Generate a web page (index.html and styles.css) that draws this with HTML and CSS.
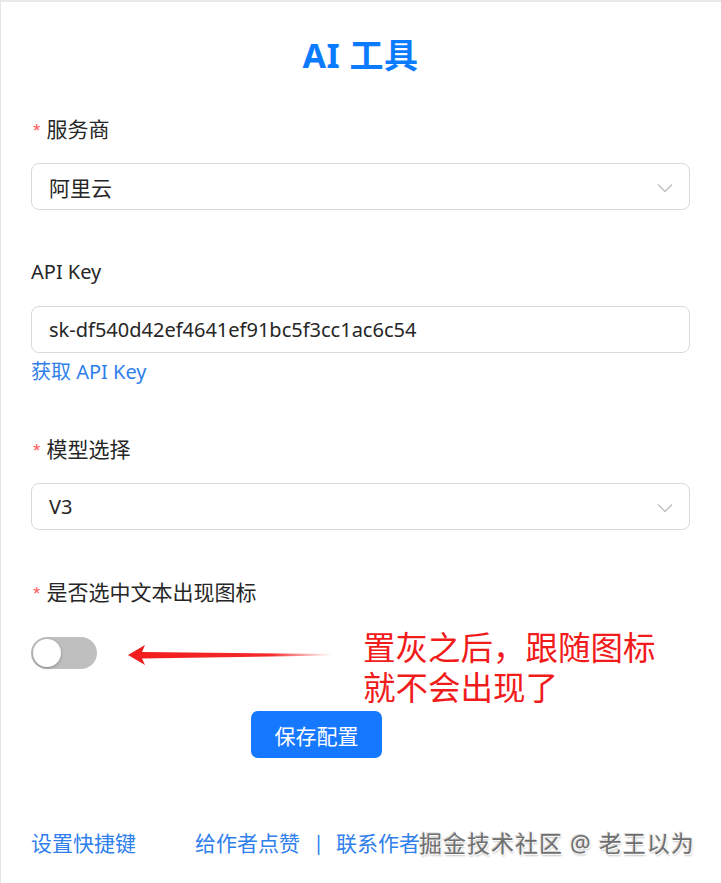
FILE: index.html
```html
<!DOCTYPE html>
<html lang="zh-CN">
<head>
<meta charset="utf-8">
<title>AI 工具</title>
<link rel="stylesheet" href="styles.css">
</head>
<body>
<div class="page">
  <h1 class="title">AI 工具</h1>

  <div class="form">
    <div class="item">
      <div class="label"><span class="req">*</span><span class="cjk">服务商</span></div>
      <div class="select">
        <span class="value cjk">阿里云</span>
        <svg class="chev" width="16" height="10" viewBox="0 0 16 10"><path d="M1 1.5 L8 8.5 L15 1.5" fill="none" stroke="#bdbdbd" stroke-width="1.3"/></svg>
      </div>
    </div>

    <div class="item">
      <div class="label">API Key</div>
      <div class="input"><span class="value">sk-df540d42ef4641ef91bc5f3cc1ac6c54</span></div>
      <a class="link getkey">获取 API Key</a>
    </div>

    <div class="item">
      <div class="label"><span class="req">*</span><span class="cjk">模型选择</span></div>
      <div class="select">
        <span class="value">V3</span>
        <svg class="chev" width="16" height="10" viewBox="0 0 16 10"><path d="M1 1.5 L8 8.5 L15 1.5" fill="none" stroke="#bdbdbd" stroke-width="1.3"/></svg>
      </div>
    </div>

    <div class="item">
      <div class="label"><span class="req">*</span><span class="cjk">是否选中文本出现图标</span></div>
      <div class="switch-row">
        <div class="switch"><span class="knob"></span></div>
        <svg class="arrow" width="204" height="22" viewBox="0 0 204 22">
          <defs>
            <linearGradient id="g" x1="0" x2="1" y1="0" y2="0">
              <stop offset="0" stop-color="#f21d1d"/>
              <stop offset="0.7" stop-color="#f42a2a"/>
              <stop offset="1" stop-color="#ff4040" stop-opacity="0"/>
            </linearGradient>
          </defs>
          <path d="M0 11 L17 1 L14 8 L204 10 L204 11.5 L14 14.5 L17 21 Z" fill="url(#g)"/>
        </svg>
        <div class="note">
          <div class="note-line">置灰之后，跟随图标</div>
          <div class="note-line">就不会出现了</div>
        </div>
      </div>
    </div>

    <div class="actions">
      <button class="btn">保存配置</button>
    </div>
  </div>

  <div class="footer">
    <a class="link cjk">设置快捷键</a>
    <div class="footer-right">
      <a class="link cjk">给作者点赞</a>
      <span class="sep">|</span>
      <a class="link cjk">联系作者</a>
    </div>
    <span class="watermark">掘金技术社区 @ 老王以为</span>
  </div>
</div>
</body>
</html>
```

FILE: styles.css
```css
html, body {
  margin: 0;
  padding: 0;
  background: #fff;
}
body {
  font-family: "Noto Sans", "Noto Sans CJK SC", sans-serif;
  color: #262626;
}
.page {
  position: relative;
  width: 721px;
  height: 883px;
  box-sizing: border-box;
  border-top: 2px solid #e9e9e9;
  border-left: 1px solid #e6e6e6;
  padding: 0 31px 0 30px;
}
.title {
  margin: 33px 0 0;
  text-align: center;
  font-size: 34px;
  line-height: 40px;
  font-weight: 700;
  color: #0b7cff;
  letter-spacing: 0.5px;
}
.form {
  margin-top: 34px;
}
.item {
  display: flex;
  flex-direction: column;
  margin-bottom: 42px;
}
.label {
  font-size: 20px;
  line-height: 40px;
  height: 40px;
  margin-bottom: 14px;
  color: #262626;
}
.cjk {
  font-size: 21px;
}
.req {
  color: #ff5a5c;
  font-size: 19px;
  margin: 0 6px 0 2px;
  font-family: "Liberation Sans", sans-serif;
}
.select, .input {
  height: 47px;
  box-sizing: border-box;
  border: 1px solid #d9d9d9;
  border-radius: 8px;
  display: flex;
  align-items: center;
  justify-content: space-between;
  padding: 0 16px 0 17px;
  background: #fff;
}
.value {
  font-size: 20px;
  color: #262626;
}
.value.cjk {
  font-size: 21px;
}
.chev {
  display: block;
  margin-top: 2px;
}
.link {
  color: #2f80ec;
  font-size: 20px;
  text-decoration: none;
  cursor: pointer;
}
.link.cjk {
  font-size: 21px;
}
.getkey {
  line-height: 30px;
  margin-top: 4px;
  align-self: flex-start;
}
.switch-row {
  position: relative;
  height: 47px;
  display: flex;
  align-items: center;
  padding-top: 7px;
  box-sizing: border-box;
}
.switch {
  width: 66px;
  height: 32px;
  border-radius: 16px;
  background: #bfbfbf;
  position: relative;
}
.knob {
  position: absolute;
  left: 2px;
  top: 2px;
  width: 28px;
  height: 28px;
  border-radius: 50%;
  background: #fff;
  box-shadow: 0 1px 3px rgba(0,0,0,0.3);
}
.arrow {
  position: absolute;
  left: 97px;
  top: 18px;
}
.note {
  position: absolute;
  left: 332px;
  top: 3px;
  display: flex;
  flex-direction: column;
  color: #f11b1b;
  white-space: nowrap;
  font-family: "Liberation Sans", "Noto Sans CJK SC", sans-serif;
}
.note-line {
  font-size: 32.5px;
  line-height: 40px;
  height: 40px;
}
.item:nth-child(4) {
  margin-bottom: 38px;
}
.actions {
  padding-left: 220px;
  display: flex;
}
.btn {
  width: 131px;
  height: 47px;
  border: none;
  border-radius: 7px;
  background: #1677ff;
  color: #fff;
  font-family: "Noto Sans", "Noto Sans CJK SC", sans-serif;
  font-size: 21px;
  padding: 0;
  cursor: pointer;
}
.footer {
  position: relative;
  margin-top: 65px;
  display: flex;
  align-items: center;
  line-height: 40px;
  height: 40px;
}
.footer-right {
  display: flex;
  align-items: center;
  margin-left: 59px;
}
.sep {
  color: #2f80ec;
  font-size: 20px;
  margin: 0 12px 0 13px;
}
.watermark {
  position: absolute;
  left: 388px;
  top: 0;
  font-size: 23px;
  letter-spacing: 1px;
  color: #6f6f6f;
  white-space: nowrap;
  text-shadow: 1px 1px 0 #fff, -1px -1px 0 #d8d8d8, 1px 2px 2px rgba(0,0,0,0.25);
}
```
